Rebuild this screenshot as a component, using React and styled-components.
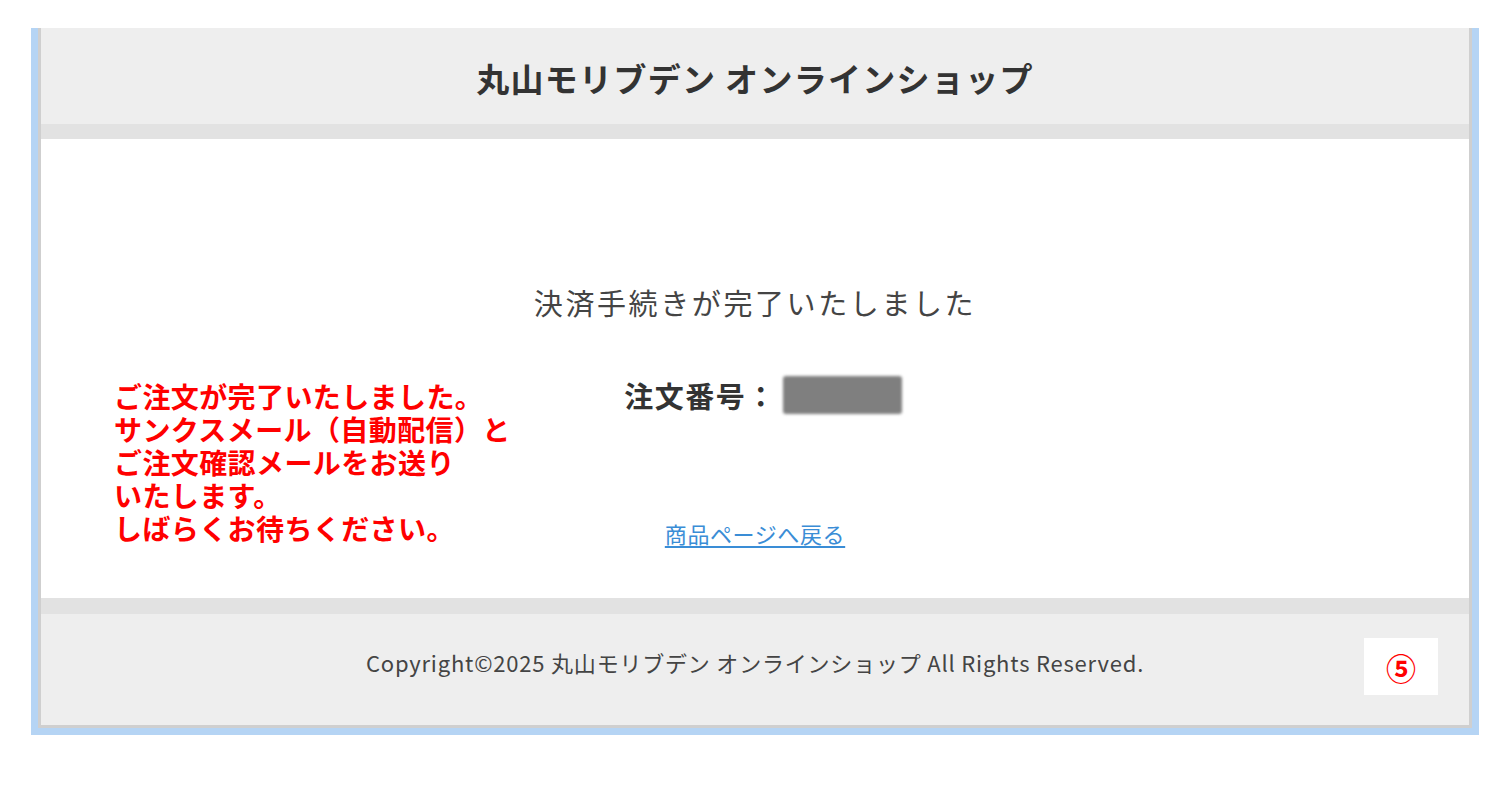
import React from "react";
import styled, { createGlobalStyle } from "styled-components";

const Global = createGlobalStyle`
  html, body { margin: 0; padding: 0; background: #ffffff; }
  body { font-family: "Noto Sans CJK JP", "Noto Sans", sans-serif; }
  * { box-sizing: border-box; }
`;

const Frame = styled.div`
  margin: 28px 0 0 31px;
  width: 1448px;
  border: 7px solid #b5d4f4;
  border-top: 0;
`;

const Page = styled.div`
  border: 3px solid #cfcfcf;
  border-top: 0;
  display: flex;
  flex-direction: column;
`;

const Header = styled.header`
  height: 111px;
  background: #eeeeee;
  border-bottom: 15px solid #e2e2e2;
  display: flex;
  align-items: center;
  justify-content: center;
  padding-top: 3px;
`;

const ShopTitle = styled.h1`
  margin: 0;
  font-size: 33px;
  font-weight: 700;
  color: #333333;
  letter-spacing: 1.3px;
`;

const Content = styled.main`
  position: relative;
  height: 459px;
  background: #ffffff;
  padding-top: 143px;
  display: flex;
  flex-direction: column;
  align-items: center;
`;

const Message = styled.p`
  margin: 0;
  font-size: 29px;
  line-height: 40px;
  color: #444444;
  letter-spacing: 2.6px;
`;

const OrderRow = styled.div`
  margin-top: 53px;
  display: flex;
  align-items: center;
  padding-left: 16px;
  height: 40px;
`;

const OrderLabel = styled.span`
  font-size: 29px;
  font-weight: 700;
  color: #333333;
  letter-spacing: 1.5px;
`;

const Redacted = styled.span`
  display: inline-block;
  width: 119px;
  height: 38px;
  margin-left: 6px;
  background: #7f7f7f;
  border-radius: 3px;
  filter: blur(1.5px);
`;

const BackLink = styled.a`
  margin-top: 103px;
  font-size: 22px;
  line-height: 30px;
  color: #3a8dd6;
  letter-spacing: 0.6px;
  text-decoration: underline;
  text-underline-offset: 3px;
`;

const Note = styled.div`
  position: absolute;
  left: 73px;
  top: 241px;
  font-size: 28px;
  line-height: 33px;
  font-weight: 700;
  color: #ff0000;
  letter-spacing: 0.4px;
`;

const Footer = styled.footer`
  position: relative;
  height: 127px;
  background: #eeeeee;
  border-top: 16px solid #e2e2e2;
  padding-top: 33px;
  display: flex;
  justify-content: center;
`;

const Copy = styled.p`
  margin: 0;
  font-size: 22px;
  line-height: 30px;
  color: #444444;
  letter-spacing: 0.8px;
`;

const StepBadge = styled.div`
  position: absolute;
  top: 24px;
  right: 31px;
  width: 74px;
  height: 57px;
  background: #ffffff;
  display: flex;
  align-items: center;
  justify-content: center;
  color: #ff0000;
  font-size: 30px;
  font-weight: 700;
`;

export default function App() {
  return (
    <>
      <Global />
      <Frame>
        <Page>
          <Header>
            <ShopTitle>丸山モリブデン オンラインショップ</ShopTitle>
          </Header>
          <Content>
            <Message>決済手続きが完了いたしました</Message>
            <OrderRow>
              <OrderLabel>注文番号：</OrderLabel>
              <Redacted />
            </OrderRow>
            <BackLink href="#">商品ページへ戻る</BackLink>
            <Note>
              ご注文が完了いたしました。
              <br />
              サンクスメール（自動配信）と
              <br />
              ご注文確認メールをお送り
              <br />
              いたします。
              <br />
              しばらくお待ちください。
            </Note>
          </Content>
          <Footer>
            <Copy>Copyright©2025 丸山モリブデン オンラインショップ All Rights Reserved.</Copy>
            <StepBadge>⑤</StepBadge>
          </Footer>
        </Page>
      </Frame>
    </>
  );
}
